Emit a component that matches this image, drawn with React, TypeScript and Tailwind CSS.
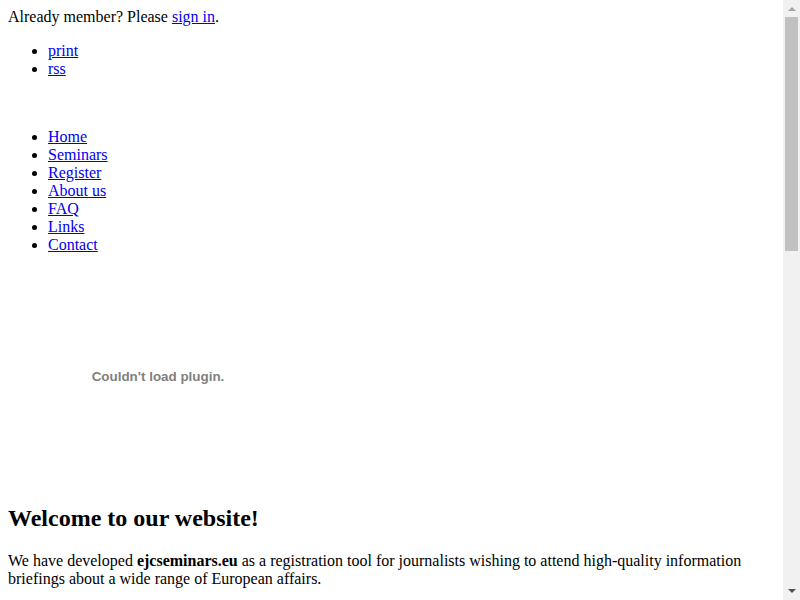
const TOOLS = ["print", "rss"];
const NAV = ["Home", "Seminars", "Register", "About us", "FAQ", "Links", "Contact"];

const Link = ({ children }: { children: React.ReactNode }) => (
  <a href="#" className="text-[#0000ee] underline">
    {children}
  </a>
);

// imitation of the browser's classic scrollbar seen in the screenshot
const Scrollbar = () => (
  <div className="fixed top-0 right-0 flex h-screen w-[17px] flex-col bg-[#f1f1f1]">
    <div className="flex h-[17px] items-center justify-center">
      <svg width="8" height="5" viewBox="0 0 8 5">
        <path d="M0 5 L4 1 L8 5 Z" fill="#a3a3a3" />
      </svg>
    </div>
    <div className="mx-[2px] h-[234px] bg-[#c1c1c1]" />
    <div className="grow" />
    <div className="flex h-[17px] items-center justify-center">
      <svg width="8" height="5" viewBox="0 0 8 5">
        <path d="M0 0 L8 0 L4 4 Z" fill="#505050" />
      </svg>
    </div>
  </div>
);

const App = () => {
  return (
    <div className="mr-[17px] p-2 font-['Liberation_Serif','Times_New_Roman',serif] text-[16px] leading-[18px] text-black bg-white">
      <div>
        Already member? Please <Link>sign in</Link>.
      </div>
      <ul className="my-4 list-disc pl-10">
        {TOOLS.map((t) => (
          <li key={t}>
            <Link>{t}</Link>
          </li>
        ))}
      </ul>
      <div className="h-[18px]" />
      <ul className="my-4 list-disc pl-10">
        {NAV.map((n) => (
          <li key={n}>
            <Link>{n}</Link>
          </li>
        ))}
      </ul>
      <div className="flex h-[214px] w-[300px] items-center justify-center">
        <span className="font-['Liberation_Sans',Arial,sans-serif] text-[13.4px] font-bold text-[#808080]">
          Couldn't load plugin.
        </span>
      </div>
      <h2 className="my-[20px] text-[24px] leading-[28px] font-bold">
        Welcome to our website!
      </h2>
      <p className="my-4">
        We have developed <b>ejcseminars.eu</b> as a registration tool for
        journalists wishing to attend high-quality information briefings about
        a wide range of European affairs.
      </p>
      <p className="my-4">
        The seminars are organised in Brussels and in the Member States and
        bring together journalists, experts and officials from the European
        institutions.
      </p>
      <p className="my-4">
        Registered members can browse the list of upcoming seminars, apply
        online and follow the status of their applications.
      </p>
      <h3 className="my-[18px] text-[18.7px] leading-[22px] font-bold">
        Upcoming seminars
      </h3>
      <ul className="my-4 list-disc pl-10">
        <li>The future of the European economy</li>
        <li>Energy and climate change</li>
        <li>Migration and asylum policy</li>
        <li>Enlargement of the European Union</li>
      </ul>
      <h3 className="my-[18px] text-[18.7px] leading-[22px] font-bold">
        How to apply
      </h3>
      <p className="my-4">
        To apply for a seminar, please <Link>register</Link> first. Once your
        account is confirmed you can sign in and submit your application.
      </p>
      <p className="my-4">
        For any question, please read our <Link>FAQ</Link> or{" "}
        <Link>contact</Link> us.
      </p>
      <div className="h-[560px]" />
      <p className="my-4">© European Journalism Centre</p>
      <Scrollbar />
    </div>
  );
};

export default App;
